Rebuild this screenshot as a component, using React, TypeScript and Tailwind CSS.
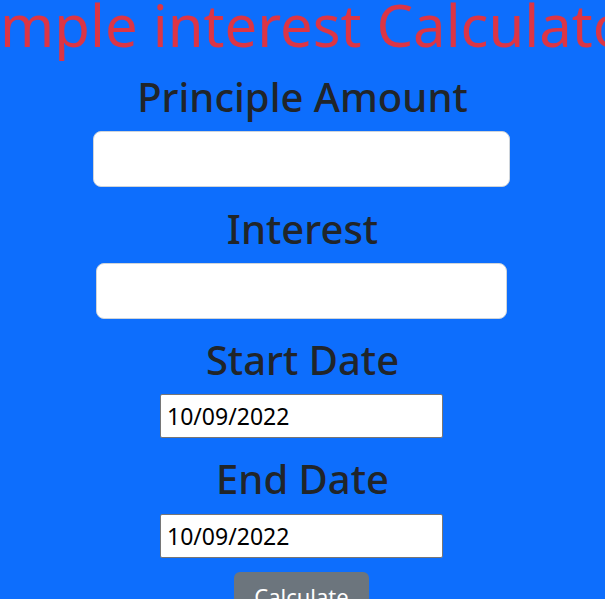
export default function App() {
  return (
    <div
      className="min-h-screen w-full overflow-hidden bg-[#0d6efd] flex flex-col items-center text-[#212529]"
      style={{ fontFamily: '"Noto Sans", "Open Sans", sans-serif' }}
    >
      <h1 className="whitespace-nowrap text-[58px] leading-[72px] text-[#dc3545] mt-[-11px]">
        Simple interest Calculator
      </h1>

      <h2 className="mt-[12px] text-[40px] leading-[48px] font-medium">Principle Amount</h2>
      <input
        type="text"
        className="mt-[10px] ml-[-2px] w-[417px] h-[56px] rounded-lg border border-[#ced4da] bg-white px-4 outline-none"
      />

      <h2 className="mt-[18px] text-[40px] leading-[48px] font-medium">Interest</h2>
      <input
        type="text"
        className="mt-[10px] ml-[-2px] w-[411px] h-[56px] rounded-lg border border-[#ced4da] bg-white px-4 outline-none"
      />

      <h2 className="mt-[17px] text-[40px] leading-[48px] font-medium">Start Date</h2>
      <input
        type="text"
        readOnly
        defaultValue="10/09/2022"
        className="mt-[10px] ml-[-2px] w-[283px] h-[44px] rounded-[2px] border border-[#767676] bg-white pl-[6px] text-[23px] text-black outline-none"
      />

      <h2 className="mt-[17px] text-[40px] leading-[48px] font-medium">End Date</h2>
      <input
        type="text"
        readOnly
        defaultValue="10/09/2022"
        className="mt-[11px] ml-[-2px] w-[283px] h-[44px] rounded-[2px] border border-[#767676] bg-white pl-[6px] text-[23px] text-black outline-none"
      />

      <button className="mt-[14px] ml-[-2px] w-[135px] h-[48px] rounded-md bg-[#6c757d] text-white text-[22px] leading-[48px]">
        Calculate
      </button>
    </div>
  );
}
